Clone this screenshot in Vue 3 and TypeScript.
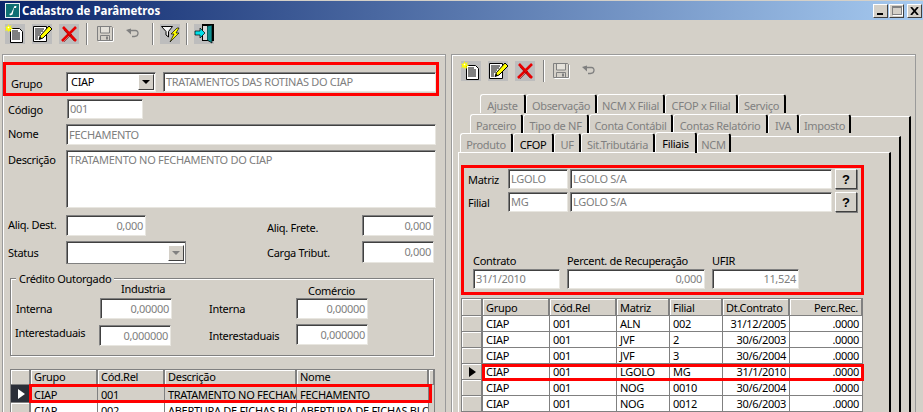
<script setup lang="ts">
interface Tab { label: string; w: number; on?: boolean; active?: boolean }
const tabs1: Tab[] = [
  { label: 'Ajuste', w: 46 }, { label: 'Observação', w: 71 }, { label: 'NCM X Filial', w: 68 },
  { label: 'CFOP x Filial', w: 73 }, { label: 'Serviço', w: 48 },
]
const tabs2: Tab[] = [
  { label: 'Parceiro', w: 53 }, { label: 'Tipo de NF', w: 66 }, { label: 'Conta Contábil', w: 84 },
  { label: 'Contas Relatório', w: 95 }, { label: 'IVA', w: 31 }, { label: 'Imposto', w: 52 },
]
const tabs3: Tab[] = [
  { label: 'Produto', w: 53 }, { label: 'CFOP', w: 41, on: true }, { label: 'UF', w: 27 },
  { label: 'Sit.Tributária', w: 74 }, { label: 'Filiais', w: 42, active: true }, { label: 'NCM', w: 34 },
]
const leftRows = [
  ['CIAP', '001', 'TRATAMENTO NO FECHAMENTO', 'FECHAMENTO'],
  ['CIAP', '002', 'ABERTURA DE FICHAS BLOCO', 'ABERTURA DE FICHAS BLOCO'],
]
const rightRows = [
  ['CIAP', '001', 'ALN', '002', '31/12/2005', '.0000'],
  ['CIAP', '001', 'JVF', '2', '30/6/2003', '.0000'],
  ['CIAP', '001', 'JVF', '3', '30/6/2004', '.0000'],
  ['CIAP', '001', 'LGOLO', 'MG', '31/1/2010', '.0000'],
  ['CIAP', '001', 'NOG', '0010', '30/6/2004', '.0000'],
  ['CIAP', '001', 'NOG', '0012', '30/6/2003', '.0000'],
]
</script>

<template>
  <div class="win">
    <svg class="defs" width="0" height="0" aria-hidden="true">
      <defs>
        <symbol id="i-new" viewBox="0 0 20 20">
          <rect width="20" height="20" fill="#bdbdbd" />
          <path d="M5.500 4.500h9l3 3v11h-12z" fill="#fff" stroke="#000" />
          <path d="M7 7h6M7 9h8M7 11h8M7 13h8M7 15h8" stroke="#000" />
          <path d="M3.500 0l1 2.500L7 1 5.500 3.500 8 4.500 5.500 5.500 6.500 8 4 6.500 3 8.500 2.500 6 0 7l1.500-2.500L0 3l2.500-.5z" fill="#ffff00" />
          <path d="M3.500 2.500l1 1-1 1-1-1z" fill="#fff" />
        </symbol>
        <symbol id="i-edit" viewBox="0 0 20 20">
          <rect width="20" height="20" fill="#bdbdbd" />
          <path d="M1.500 2.500h13v15h-13z" fill="#fff" stroke="#000" />
          <path d="M3 5h9M3 7h8M3 9h6M3 11h5M3 13h3M3 15h3" stroke="#000" />
          <path d="M7 15.500l1.500-4L17 2l3 3-9 9z" fill="#ffff00" stroke="#000" />
          <path d="M7 15.500l1-3 2 2z" fill="#000" />
        </symbol>
        <symbol id="i-del" viewBox="0 0 20 20">
          <rect width="20" height="20" fill="#bdbdbd" />
          <path d="M4 3l13 14M17 3L3 17" stroke="#e80000" stroke-width="2.600" fill="none" />
          <path d="M5 6l10 11M13 10l-8 8" stroke="#800000" stroke-width=".6" fill="none" />
        </symbol>
        <symbol id="i-save" viewBox="0 0 20 20">
          <path d="M1.500 2.500h14l1 1v13h-15z" fill="none" stroke="#808080" />
          <path d="M4.500 3v6h9V3" fill="#e4e1da" stroke="#808080" />
          <path d="M4.500 11.500h9v5h-9z" fill="none" stroke="#808080" />
          <path d="M10 12.500h2v3h-2z" fill="#808080" />
          <path d="M2.500 17.500h15M17.500 4v13" stroke="#fff" />
        </symbol>
        <symbol id="i-undo" viewBox="0 0 20 20">
          <path d="M4 6.500h7.500c3.500 0 3.500 6-1 6H8" fill="none" stroke="#808080" stroke-width="1.300" />
          <path d="M2 6l5-1.500v6z" fill="#808080" />
        </symbol>
        <symbol id="i-filter" viewBox="0 0 20 20">
          <rect width="20" height="20" fill="#bdbdbd" />
          <path d="M1.500 2.500h11L8.500 7.500V13l-2.500-2V7.500z" fill="#f4f4f4" stroke="#000" />
          <path d="M17 4l-6 6h3l-4 8 9-9h-3l3-5z" fill="#ffff00" stroke="#000" stroke-width=".7" />
        </symbol>
        <symbol id="i-exit" viewBox="0 0 20 20">
          <rect width="20" height="20" fill="#bdbdbd" />
          <path d="M8 0h12v17H8z" fill="#000" />
          <path d="M13 2l5-1v18l-5-3z" fill="#0f8f90" stroke="#000" stroke-width=".7" />
          <path d="M9 2h4v14H9z" fill="#d9d9d9" />
          <path d="M1 7h5V4l5 5-5 5v-3H1z" fill="#00e0e8" stroke="#000" stroke-width=".7" />
        </symbol>
      </defs>
    </svg>

    <header class="titlebar">
      <svg class="appicon" width="15" height="15" viewBox="0 0 15 15">
        <rect width="15" height="15" fill="#0d6f73" />
        <rect x=".5" y=".5" width="14" height="14" fill="none" stroke="#e8f2f2" />
        <path d="M9.500 3h2l-.5 2H9l-1.300 6c-.3 1-1.200 1.500-3.200 1l.3-1.500c1 .2 1.400 0 1.600-.8z" fill="#fff" />
      </svg>
      <span class="title">Cadastro de Parâmetros</span>
      <div class="winbtns">
        <span class="wb"><i class="wb-min"></i></span>
        <span class="wb"><i class="wb-max"></i></span>
        <span class="wb wb-close">
          <svg width="9" height="8" viewBox="0 0 9 8"><path d="M1 0l7 8M8 0L1 8" stroke="#000" stroke-width="1.800" fill="none" /></svg>
        </span>
      </div>
    </header>

    <nav class="toolbar">
      <svg class="ic"><use href="#i-new" /></svg>
      <svg class="ic g7"><use href="#i-edit" /></svg>
      <svg class="ic g7"><use href="#i-del" /></svg>
      <span class="sep s1"></span>
      <svg class="ic s2"><use href="#i-save" /></svg>
      <svg class="ic s3"><use href="#i-undo" /></svg>
      <span class="sep s4"></span>
      <svg class="ic s5"><use href="#i-filter" /></svg>
      <span class="sep s5"></span>
      <svg class="ic s6"><use href="#i-exit" /></svg>
    </nav>

    <main class="panes">
      <section class="pane left">
        <div class="redbox group-box">
          <span class="lab w55">Grupo</span>
          <div class="combo combo-grupo sunk"><span class="val black">CIAP</span><span class="drop"><i></i></span></div>
          <div class="field trat sunk"><span>TRATAMENTOS DAS ROTINAS DO CIAP</span></div>
        </div>

        <div class="row r-cod"><span class="lab w59">Código</span><div class="field cod sunk"><span>001</span></div></div>
        <div class="row r-nome"><span class="lab w58 up1">Nome</span><div class="field wide h21 sunk"><span>FECHAMENTO</span></div></div>
        <div class="row r-desc"><span class="lab w58 up1">Descrição</span><div class="field wide h58 top sunk"><span>TRATAMENTO NO FECHAMENTO DO CIAP</span></div></div>
        <div class="row r-aliq">
          <span class="lab w58 up1">Aliq. Dest.</span><div class="field num w80 h21 sunk"><span>0,000</span></div>
          <span class="lab w95 ml121 dn2">Aliq. Frete.</span><div class="field num w72 h21 sunk"><span>0,000</span></div>
        </div>
        <div class="row r-status">
          <span class="lab w58 dn1">Status</span>
          <div class="combo combo-status sunk"><span class="val"></span><span class="drop dis"><i></i></span></div>
          <span class="lab w95 ml81 dn1">Carga Tribut.</span><div class="field num w72 h22 sunk"><span>0,000</span></div>
        </div>

        <div class="group">
          <span class="legend">Crédito Outorgado</span>
          <div class="g-head"><span class="gh1">Industria</span><span class="gh2">Comércio</span></div>
          <div class="g-row">
            <span class="lab w84">Interna</span><div class="field num w72 h21 sunk"><span>0,00000</span></div>
            <span class="lab w87 ml37">Interna</span><div class="field num w72 h21 sunk"><span>0,00000</span></div>
          </div>
          <div class="g-row g2">
            <span class="lab w84 tight">Interestaduais</span><div class="field num w72 h21 sunk"><span>0,000000</span></div>
            <span class="lab w87 ml38">Interestaduais</span><div class="field num w72 h21 sunk nudge"><span>0,000000</span></div>
          </div>
        </div>

        <div class="gridwrap lgrid">
          <table class="grid">
            <colgroup><col style="width: 20px" /><col style="width: 67px" /><col style="width: 67px" /><col style="width: 132px" /><col style="width: 132px" /><col style="width: 6px" /></colgroup>
            <thead><tr><th class="ind"></th><th>Grupo</th><th>Cód.Rel</th><th>Descrição</th><th>Nome</th><th></th></tr></thead>
            <tbody>
              <tr v-for="(r, i) in leftRows" :key="i" :class="{ sel: i === 0 }">
                <td class="ind" :class="{ 'ind-dark': i === 0 }"><i v-if="i === 0" class="arrow white"></i></td>
                <td v-for="(c, j) in r" :key="j">{{ c }}</td>
                <td class="blank"></td>
              </tr>
            </tbody>
          </table>
          <div class="rowmark lmark"></div>
        </div>
      </section>

      <section class="pane right">
        <nav class="rtools">
          <svg class="ic"><use href="#i-new" /></svg>
          <svg class="ic g7"><use href="#i-edit" /></svg>
          <svg class="ic g7"><use href="#i-del" /></svg>
          <span class="sep rs1"></span>
          <svg class="ic rs2"><use href="#i-save" /></svg>
          <svg class="ic rs3"><use href="#i-undo" /></svg>
        </nav>

        <div class="tabrow tr1">
          <span v-for="t in tabs1" :key="t.label" class="tab" :style="{ width: t.w + 'px' }">{{ t.label }}</span>
        </div>
        <div class="tabrow tr2">
          <span v-for="t in tabs2" :key="t.label" class="tab" :style="{ width: t.w + 'px' }">{{ t.label }}</span>
          <span class="filler f2"></span>
        </div>
        <div class="layer l2">
          <div class="tabrow tr3">
            <span v-for="t in tabs3" :key="t.label" class="tab" :class="{ on: t.on, active: t.active }" :style="{ width: t.w + 'px' }">{{ t.label }}</span>
            <span class="filler f3"></span>
          </div>
          <div class="layer l3">
            <div class="sheet">
              <div class="redbox filial-box">
                <div class="row f1">
                  <span class="lab w40">Matriz</span>
                  <div class="field w60 h20 sunk"><span>LGOLO</span></div>
                  <div class="field w262 h20 sunk"><span>LGOLO S/A</span></div>
                  <button class="q" type="button">?</button>
                </div>
                <div class="row f2r">
                  <span class="lab w40">Filial</span>
                  <div class="field w60 h20 sunk"><span>MG</span></div>
                  <div class="field w262 h20 sunk"><span>LGOLO S/A</span></div>
                  <button class="q" type="button">?</button>
                </div>
                <div class="row f3l">
                  <span class="cap c87">Contrato</span><span class="cap c138">Percent. de Recuperação</span><span class="cap c87">UFIR</span>
                </div>
                <div class="row f4">
                  <div class="field c87 h20 sunk"><span>31/1/2010</span></div>
                  <div class="field num c138 h20 sunk"><span>0,000</span></div>
                  <div class="field num c87 h20 sunk"><span>11,524</span></div>
                </div>
              </div>

              <div class="gridwrap rgrid">
                <table class="grid">
                  <colgroup><col style="width: 21px" /><col style="width: 67px" /><col style="width: 67px" /><col style="width: 53px" /><col style="width: 53px" /><col style="width: 67px" /><col style="width: 73px" /></colgroup>
                  <thead><tr><th class="ind"></th><th>Grupo</th><th>Cód.Rel</th><th>Matriz</th><th>Filial</th><th>Dt.Contrato</th><th class="rt">Perc.Rec.</th></tr></thead>
                  <tbody>
                    <tr v-for="(r, i) in rightRows" :key="i">
                      <td class="ind"><i v-if="i === 3" class="arrow"></i></td>
                      <td>{{ r[0] }}</td><td>{{ r[1] }}</td><td>{{ r[2] }}</td><td>{{ r[3] }}</td>
                      <td class="rt">{{ r[4] }}</td><td class="rt">{{ r[5] }}</td>
                    </tr>
                  </tbody>
                </table>
                <div class="rowmark rmark"></div>
              </div>
            </div>
          </div>
        </div>
      </section>
    </main>
  </div>
</template>

<style>
html, body { margin: 0; overflow: hidden; background: #d4d0c8; }
</style>

<style scoped>
.win {
  width: 923px; height: 412px; overflow: hidden; background: #d4d0c8; position: relative;
  font-family: "Noto Sans", "DejaVu Sans", sans-serif; font-size: 11px; letter-spacing: -0.3px; color: #000; box-sizing: border-box; padding-top: 1px;
}
.win * { box-sizing: border-box; }
.defs { position: absolute; }

.titlebar { height: 19px; display: flex; align-items: center; padding-left: 5px; background: linear-gradient(90deg, #0a246a 0%, #a6caf0 100%); }
.title { margin-left: 2px; color: #fff; font-weight: 700; font-size: 11.500px; letter-spacing: 0; }
.winbtns { margin-left: auto; display: flex; margin-right: 1px; }
.wb { width: 15px; height: 14px; margin-left: 1px; background: #d4d0c8; border: 1px solid; border-color: #fff #404040 #404040 #fff; display: flex; align-items: center; justify-content: center; position: relative; }
.wb-close { margin-left: 3px; }
.wb-min { width: 6px; height: 2px; background: #000; margin-top: 6px; margin-right: 2px; }
.wb-max { width: 10px; height: 9px; border: 1px solid #808080; border-top-width: 2px; box-shadow: 1px 1px #fff; }

.toolbar { height: 34px; display: flex; align-items: center; padding-left: 5px; padding-bottom: 6px; }
.ic { width: 20px; height: 20px; flex: none; display: block; }
.g7 { margin-left: 7px; }
.sep { width: 2px; height: 22px; background: #808080; border-right: 1px solid #fff; flex: none; }
.s1 { margin-left: 7px; }
.s2 { margin-left: 8px; }
.s3 { margin-left: 8px; }
.s4 { margin-left: 8px; }
.s5 { margin-left: 6px; }
.s6 { margin-left: 6px; }

.panes { display: flex; padding-left: 2px; align-items: flex-start; }
.pane { border: 1px solid #9a9a9a; border-bottom: 0; height: 400px; }
.left { width: 444px; box-shadow: inset 1px 1px #fff; }
.right { width: 465px; margin-left: 5px; box-shadow: inset 1px 1px #fff; }

.lab { display: block; flex: none; line-height: 16px; padding-top: 3px; }
.up1 { padding-top: 2px; }
.dn1 { padding-top: 4px; }
.dn2 { padding-top: 5px; }
.tight { padding-top: 0; margin-left: -1px; width: 83px; }
.nudge { margin-top: -1px; }
.w55 { width: 55px; padding-top: 4px; }
.w58 { width: 58px; }
.w59 { width: 59px; }
.w95 { width: 95px; }
.w84 { width: 84px; }
.w87 { width: 87px; }
.w40 { width: 40px; }
.ml121 { margin-left: 121px; }
.ml81 { margin-left: 81px; }
.ml37 { margin-left: 37px; }
.ml38 { margin-left: 38px; }

.sunk { background: #fff; border: 1px solid; border-color: #808080 #e8e6e0 #e8e6e0 #808080; box-shadow: inset 1px 1px #404040; flex: none; }
.field { color: #808080; display: flex; align-items: center; padding: 0 2px 1px 2px; white-space: nowrap; overflow: hidden; }
.top { align-items: flex-start; padding-top: 1px; }
.num { justify-content: flex-end; }
.h20 { height: 20px; }
.h21 { height: 21px; }
.h22 { height: 22px; }
.h58 { height: 58px; }
.w60 { width: 60px; }
.w72 { width: 72px; }
.w80 { width: 80px; }
.w262 { width: 262px; margin-left: 2px; }
.wide { width: 370px; }

.redbox { border: 3px solid #ff0000; }
.group-box { width: 436px; height: 34px; margin-top: 7px; display: flex; padding-left: 5px; padding-top: 7px; }
.combo { display: flex; align-items: center; }
.combo-grupo { width: 90px; height: 20px; }
.combo-status { width: 120px; height: 23px; border-color: #808080; }
.val { flex: 1; padding-left: 4px; padding-bottom: 1px; }
.black { color: #000; }
.drop { width: 16px; height: 16px; margin-right: 1px; background: #d4d0c8; border: 1px solid; border-color: #fff #404040 #404040 #fff; display: flex; align-items: center; justify-content: center; }
.drop i { width: 0; height: 0; border: 4px solid transparent; border-top: 4px solid #000; border-bottom: 0; }
.drop.dis i { border-top-color: #808080; }
.trat { width: 273px; height: 20px; margin-left: 7px; }

.row { display: flex; padding-left: 5px; }
.r-cod { margin-top: 3px; }
.cod { width: 76px; height: 20px; }
.r-nome { margin-top: 5px; }
.r-desc { margin-top: 5px; }
.r-aliq { margin-top: 7px; }
.r-status { margin-top: 5px; }

.group { position: relative; width: 424px; height: 78px; margin: 14px 0 0 7px; border: 1px solid #808080; box-shadow: inset 1px 1px #fff, 1px 1px #fff; padding: 4px 0 0 5px; }
.legend { position: absolute; left: 5px; top: -7px; background: #d4d0c8; padding: 0 3px; line-height: 14px; }
.g-head { display: flex; height: 15px; line-height: 15px; }
.gh1 { margin-left: 105px; margin-top: -2px; width: 187px; }
.g-row { display: flex; }
.g2 { margin-top: 6px; }

.gridwrap { position: relative; }
.lgrid { margin: 13px 0 0 7px; width: 424px; }
.grid { border-collapse: separate; border-spacing: 0; table-layout: fixed; width: 100%; border-left: 1px solid #808080; border-top: 1px solid #808080; background: #fff; }
.grid th { background: #d4d0c8; font-weight: 400; text-align: left; height: 17px; padding: 0 3px; border-right: 2px solid #808080; border-bottom: 1px solid #808080; box-shadow: inset 1px 1px #fff; white-space: nowrap; overflow: hidden; }
.lgrid th { height: 15px; line-height: 14px; }
.grid td { height: 16px; padding: 0 3px; border-right: 1px solid #808080; border-bottom: 1px solid #808080; white-space: nowrap; overflow: hidden; line-height: 14px; }
.grid .rt { text-align: right; }
.grid td.ind { background: #d4d0c8; box-shadow: inset 1px 1px #fff; border-right: 2px solid #808080; padding: 0; }
.grid td.blank { background: #d4d0c8; border-bottom: 0; }
.lgrid .sel td { background: #d4d0c8; height: 18px; padding-top: 2px; }
.lgrid .sel td.ind-dark { background: #2b2f38; padding: 0; box-shadow: none; }
.arrow { display: block; width: 0; height: 0; margin-left: 7px; border: 5px solid transparent; border-left: 7px solid #000; border-right: 0; }
.arrow.white { border-left-color: #fff; }
.rowmark { position: absolute; border: 3px solid #ff0000; pointer-events: none; }
.lmark { left: 19px; top: 15px; width: 403px; height: 19px; }

.rtools { height: 26px; display: flex; align-items: center; padding-left: 9px; margin-top: 3px; }
.rs1 { margin-left: 8px; }
.rs2 { margin-left: 7px; }
.rs3 { margin-left: 8px; }

.tabrow { display: flex; align-items: flex-end; }
.tr1 { height: 20px; margin-top: 9px; padding-left: 28px; }
.tr2 { height: 20px; padding-left: 18px; margin-right: 4px; }
.tr3 { height: 19px; padding-left: 8px; }
.tab { height: 19px; flex: none; color: #808080; text-align: center; line-height: 19px; padding-top: 1px; white-space: nowrap; overflow: hidden; border: 1px solid; border-color: #fff #000 transparent #fff; border-right-width: 2px; border-bottom: 0; border-radius: 3px 3px 0 0; }
.tab.on { color: #000; }
.tab.active { color: #000; height: 21px; position: relative; z-index: 1; margin-bottom: -1px; }
.filler { flex: 1; align-self: stretch; margin-top: 3px; border-top: 1px solid #fff; border-right: 2px solid #000; }
.layer { padding-right: 8px; }
.l2 { margin-right: 4px; border-right: 2px solid #000; }
.l3 { border-right: 2px solid #000; }
.sheet { margin-left: 6px; height: 262px; border-top: 1px solid #fff; border-left: 1px solid #fff; border-right: 2px solid #000; padding: 12px 0 0 2px; }

.filial-box { width: 403px; height: 130px; }
.f1 { margin-top: 1px; padding-left: 4px; }
.f2r { margin-top: 3px; padding-left: 4px; }
.q { width: 22px; height: 20px; margin-left: 3px; padding: 0; background: #d4d0c8; font: 700 13px "Liberation Sans", sans-serif; border: 1px solid; border-color: #fff #404040 #404040 #fff; box-shadow: 1px 1px #808080; color: #000; }
.f3l { margin-top: 41px; padding-left: 9px; gap: 7px; }
.cap { line-height: 16px; display: block; flex: none; }
.c87 { width: 87px; }
.c138 { width: 138px; }
.f4 { padding-left: 9px; gap: 7px; }
.rgrid { margin-top: 3px; width: 401px; }
.rmark { left: 21px; top: 66px; width: 382px; height: 17px; }
</style>
